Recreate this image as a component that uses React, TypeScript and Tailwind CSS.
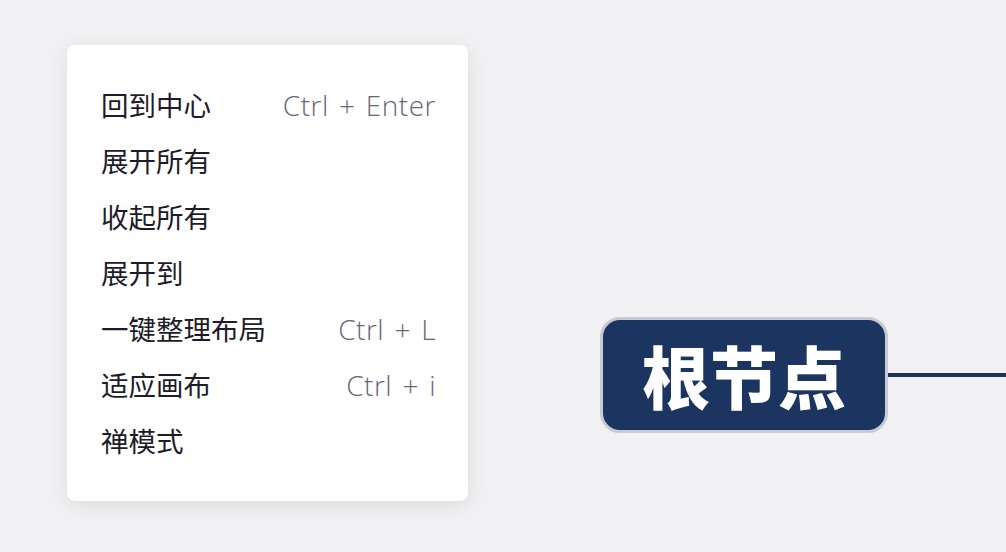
const items: { label: string; shortcut?: string }[] = [
  { label: '回到中心', shortcut: 'Ctrl + Enter' },
  { label: '展开所有' },
  { label: '收起所有' },
  { label: '展开到' },
  { label: '一键整理布局', shortcut: 'Ctrl + L' },
  { label: '适应画布', shortcut: 'Ctrl + i' },
  { label: '禅模式' },
];

const cjk = "font-['Noto_Sans_CJK_SC','Noto_Sans',sans-serif]";

export default function App() {
  return (
    <div className="w-[1006px] h-[552px] overflow-hidden bg-[#f1f1f3] flex items-start pl-[67px]">
      {/* Context menu */}
      <div className="mt-[45px] w-[401px] shrink-0 rounded-[8px] bg-white py-[32px] pl-[34px] pr-[32px] shadow-[0_4px_18px_rgba(0,0,0,0.09)]">
        {items.map((it) => (
          <div key={it.label} className="h-[56px] flex items-center justify-between">
            <span className={`${cjk} text-[27.5px] leading-none text-[#1e1b2a]`}>{it.label}</span>
            {it.shortcut && (
              <span className="font-['Open_Sans',sans-serif] font-light text-[28px] leading-none tracking-[0.5px] [word-spacing:2.5px] text-[#6c6479]">
                {it.shortcut}
              </span>
            )}
          </div>
        ))}
      </div>

      {/* Root node */}
      <div className="mt-[317px] ml-[132px] flex flex-1 items-center">
        <div className="w-[288px] h-[116px] shrink-0 rounded-[20px] border-[3px] border-[#c6cbd3] bg-[#1b3560] flex items-center justify-center">
          <span className={`${cjk} text-[68px] font-black leading-none text-white`}>根节点</span>
        </div>
        <div className="h-[4px] flex-1 bg-[#1b3560]" />
      </div>
    </div>
  );
}
